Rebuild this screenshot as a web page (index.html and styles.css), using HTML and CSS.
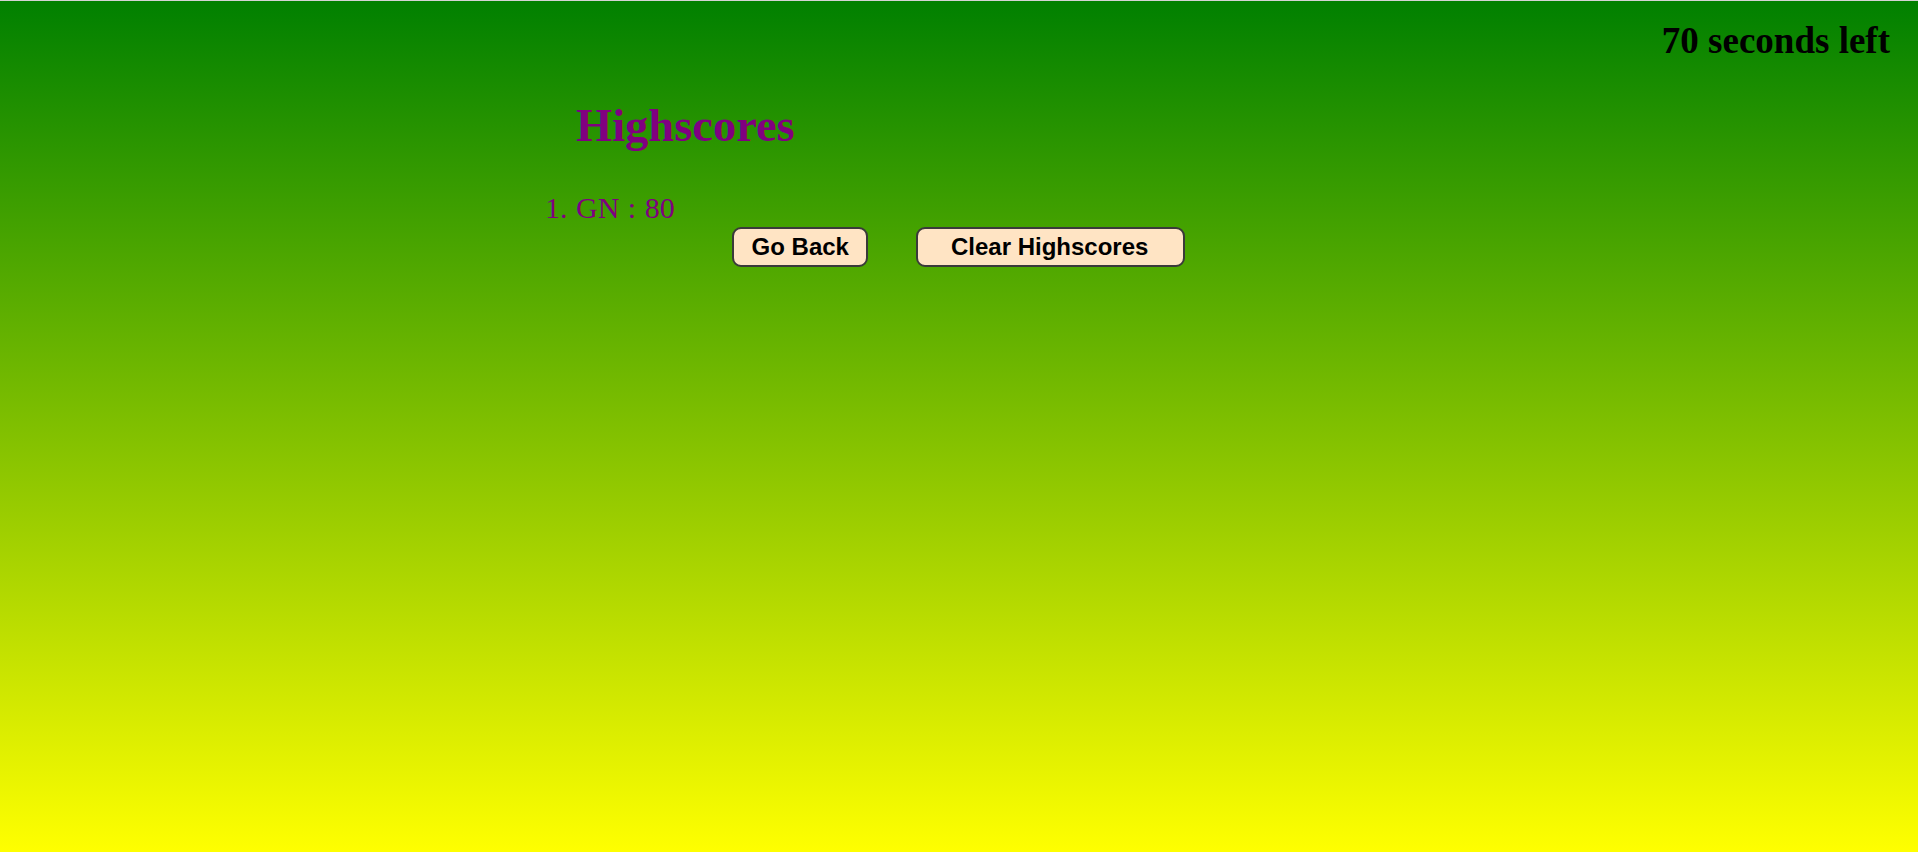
FILE: index.html
```html
<!DOCTYPE html>
<html lang="en">
<head>
<meta charset="utf-8">
<title>Highscores</title>
<link rel="stylesheet" href="styles.css">
</head>
<body>
  <header class="topbar">
    <div class="timer">70 seconds left</div>
  </header>
  <main class="scores">
    <h1 class="scores-title">Highscores</h1>
    <ul class="score-list">
      <li class="score-item">1. GN : 80</li>
    </ul>
  </main>
  <div class="actions">
    <button class="btn btn-back">Go Back</button>
    <button class="btn btn-clear">Clear Highscores</button>
  </div>
</body>
</html>
```

FILE: styles.css
```css
html {
  margin: 0;
  padding: 0;
}

body {
  margin: 0;
  min-height: 100vh;
  box-sizing: border-box;
  border-top: 1px solid #d3d3d3;
  background: linear-gradient(to bottom, #008000 0%, #ffff00 100%);
  font-family: "Liberation Serif", "Times New Roman", serif;
}

.topbar {
  display: flex;
  justify-content: flex-end;
  padding: 19px 28px 0 0;
}

.timer {
  font-size: 37px;
  line-height: 42px;
  font-weight: bold;
  color: #000;
}

.scores {
  margin: 37px 0 0 545px;
}

.scores-title {
  margin: 0;
  padding-left: 31px;
  font-size: 46.5px;
  line-height: 54px;
  font-weight: bold;
  color: #800080;
}

.score-list {
  list-style: none;
  margin: 38px 0 0 0;
  padding: 0;
}

.score-item {
  font-size: 30px;
  line-height: 34px;
  word-spacing: 1px;
  color: #800080;
}

.actions {
  display: flex;
  justify-content: center;
  gap: 48px;
  margin-top: 2px;
  padding-right: 1px;
}

.btn {
  box-sizing: border-box;
  height: 40px;
  border: 2px solid #3a3a3a;
  border-radius: 9px;
  background: #ffe4c4;
  color: #000;
  font-family: "Liberation Sans", Arial, sans-serif;
  font-size: 24px;
  font-weight: bold;
  line-height: 28px;
  padding: 4px 17px 4px 18px;
  cursor: pointer;
}

.btn-clear {
  padding: 4px 35px 4px 33px;
}
```
